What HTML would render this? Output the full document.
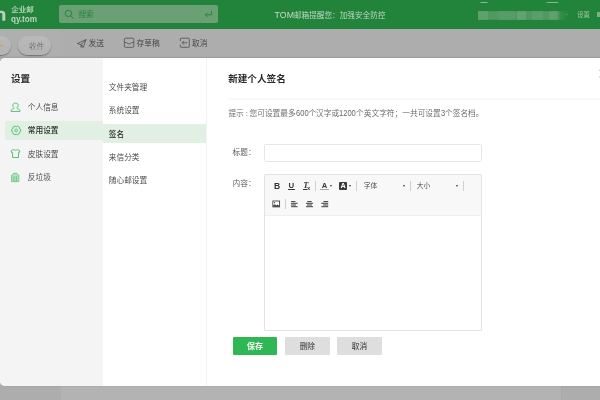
<!DOCTYPE html>
<html lang="zh-CN">
<head>
<meta charset="utf-8">
<title>TOM企业邮 - 设置</title>
<style>
*{box-sizing:border-box;margin:0;padding:0}
html,body{width:600px;height:400px;overflow:hidden;background:#b3b3b3}
body{position:relative;font-family:"Liberation Sans","Noto Sans CJK SC",sans-serif;font-size:7.7px;color:#444;line-height:1}
.abs{position:absolute;white-space:nowrap}
/* header */
#hdr{left:0;top:0;width:600px;height:29.2px;background:#21843a}
#search{left:59.3px;top:5.4px;width:158.5px;height:17.8px;border-radius:2px;background:#6b9f74}
.ht{color:#c6dbca}
/* toolbar */
#tb{left:0;top:29.2px;width:600px;height:28.8px;background:#adadad}
#tbl{left:0;top:29.2px;width:60.3px;height:28.8px;background:#afafaf}
.pill{border-radius:10px;background:linear-gradient(#b9b9b9,#b3b3b3);box-shadow:0 1.1px 1.4px rgba(0,0,0,.38)}
.tt{color:#3e3e3e;font-weight:350}
/* modal */
#modal{left:0;top:57.7px;width:600px;height:327.9px;background:#fff;border-radius:5px 0 0 5px;overflow:hidden;box-shadow:0 0 2px rgba(0,0,0,.12)}
#lp{left:0;top:0;width:103px;height:332px;background:#f4f4f4}
#dv{left:206px;top:0;width:1px;height:332px;background:#f2f2f2}
.hl{background:#e2efe3}
.mi{color:#3e3e3e;font-size:7.7px;line-height:10px;font-weight:350}
h1,h2{font-weight:bold;font-size:9.6px;color:#2a2a2a;line-height:13px}
.btn{height:17.6px;width:44.7px;border-radius:1px;text-align:center;line-height:19.2px;font-size:7.7px}
.sep{width:1px;height:9.5px;background:#d0d0d0}
.car{width:0;height:0;border-left:1.8px solid transparent;border-right:1.8px solid transparent;border-top:2.4px solid #3a3a3a;margin-left:-0.2px;margin-top:-0.2px}
.ic{color:#3a3a3a;font-weight:bold}
.dg{display:inline-block;font-size:8.8px;line-height:10px;transform:scaleX(.86);transform-origin:0 50%;color:#686868;font-weight:400}
</style>
</head>
<body>
<div id="root" style="position:absolute;left:0;top:0;width:600px;height:400px;will-change:transform;overflow:hidden">
<!-- header -->
<div id="hdr" class="abs"></div>
<svg class="abs" style="left:0;top:10px" width="7" height="12" viewBox="0 0 7 12"><path d="M-3 10.8V3.9C-3 2.1 -1.6 0.7 0.2 0.7h1.9C3.9 0.7 5.3 2.1 5.3 3.9V10.8H2.3V4.1C2.3 3.3 1.9 2.9 1.2 2.9H0V10.8Z" fill="#bfcdc2"/></svg>
<div class="abs" style="left:11.2px;top:5.3px;color:#b0cfb7;font-weight:bold;font-size:7.5px;line-height:9px;transform:scaleY(.88);transform-origin:0 8.4px">企业邮</div>
<div class="abs" style="left:10.9px;top:14.4px;color:#bdd3c2;font-weight:bold;font-size:8.2px;line-height:11px">qy.tom</div>
<div id="search" class="abs"></div>
<svg class="abs" style="left:64.2px;top:8.9px" width="11" height="11" viewBox="0 0 10 10"><circle cx="4" cy="4" r="2.9" fill="none" stroke="#24823c" stroke-width="0.85"/><path d="M6.1 6.1L8.6 8.8" stroke="#24823c" stroke-width="0.85"/></svg>
<div class="abs" style="left:78.4px;top:9.8px;color:#2c8342;font-size:7.7px;line-height:10px">搜索</div>
<svg class="abs" style="left:204px;top:10px" width="9" height="8" viewBox="0 0 9 8"><path d="M7.5 0.8V4.8H1.5M3.6 2.6L1.4 4.8L3.6 7" fill="none" stroke="#24823c" stroke-width="0.9"/></svg>
<div class="abs ht" style="left:274.6px;top:10px;font-size:7.64px;line-height:10px;font-weight:350"><span style="font-size:8.8px;font-weight:400">TOM</span>邮箱提醒您：加强安全防控</div>
<svg class="abs" style="left:477px;top:10px" width="92" height="11" viewBox="0 0 92 11"><defs><filter id="bl" x="-5%" y="-20%" width="110%" height="140%"><feGaussianBlur stdDeviation="0.7"/></filter><linearGradient id="fd" x1="0" x2="1"><stop offset="0" stop-color="#3d9052"/><stop offset="1" stop-color="#2a8841" stop-opacity="0.6"/></linearGradient></defs><g filter="url(#bl)"><rect x="1" y="1.2" width="81" height="8.6" fill="#52995f"/><rect x="1" y="1.2" width="10" height="8.6" fill="#5ea06c"/><rect x="22" y="1.2" width="16" height="8.6" fill="#579c66"/><rect x="40" y="1.2" width="9" height="8.6" fill="#60a26f"/><rect x="55" y="1.2" width="11" height="8.6" fill="#5a9e69"/><rect x="72" y="1.2" width="8" height="8.6" fill="#5ea06c"/><rect x="82" y="1.2" width="8" height="8.6" fill="url(#fd)"/></g></svg>
<div class="abs" style="left:566.4px;top:13.6px;width:0;height:0;border-left:1.3px solid transparent;border-right:1.3px solid transparent;border-top:1.6px solid #6aa878"></div>
<div class="abs" style="left:577.2px;top:10.2px;font-size:6.3px;line-height:9px;color:#b4cfba;font-weight:350">设置</div>
<div class="abs" style="left:596.8px;top:12px;width:4px;height:5.4px;background:#7db08a"></div>
<div class="abs" style="left:479.5px;top:1.7px;width:8px;height:1.8px;border-radius:50%;background:#86bd93"></div>
<div class="abs" style="left:545.8px;top:1.7px;width:13px;height:1.8px;border-radius:50%;background:#86bd93"></div>
<!-- toolbar -->
<div id="tb" class="abs"></div>
<div id="tbl" class="abs"></div>
<div class="abs pill" style="left:-9px;top:36px;width:20.2px;height:19.4px"></div>
<div class="abs" style="left:0;top:44.8px;width:2.9px;height:1.3px;background:#d6a322"></div>
<div class="abs pill" style="left:18px;top:36px;width:33.3px;height:19.4px"></div>
<div class="abs" style="left:29px;top:41.8px;color:#5c5c5c;font-weight:300;font-size:7.6px;line-height:10px">收件</div>
<svg class="abs" style="left:76px;top:37.6px" width="12" height="12" viewBox="0 0 12 12"><path d="M1.2 5.6L10 1.6L7.2 9.6L5.2 6.6Z M5.2 6.6L10 1.6 M5.2 6.6L4.9 9.4L6.3 8.1" fill="none" stroke="#4a4a4a" stroke-width="0.75" stroke-linejoin="round"/></svg>
<div class="abs tt" style="left:88.5px;top:38.9px;line-height:10px">发送</div>
<svg class="abs" style="left:123.4px;top:37.4px" width="12" height="12" viewBox="0 0 12 12"><rect x="1.4" y="1.2" width="9.4" height="9.1" rx="0.9" fill="none" stroke="#4a4a4a" stroke-width="0.75"/><path d="M1.4 5.6H3.8C4.2 7.4 8 7.4 8.4 5.6H10.8" fill="none" stroke="#4a4a4a" stroke-width="0.75"/></svg>
<div class="abs tt" style="left:136.5px;top:38.9px;line-height:10px">存草稿</div>
<svg class="abs" style="left:179px;top:37.4px" width="12" height="12" viewBox="0 0 12 12"><path d="M1.4 4V1.9Q1.4 1.2 2.1 1.2H9.6Q10.3 1.2 10.3 1.9V9.6Q10.3 10.3 9.6 10.3H2.1Q1.4 10.3 1.4 9.6V7.5" fill="none" stroke="#4a4a4a" stroke-width="0.75"/><path d="M8.4 5.75H3.2M5 3.9L3.2 5.75L5 7.6" fill="none" stroke="#4a4a4a" stroke-width="0.75"/></svg>
<div class="abs tt" style="left:192px;top:38.9px;line-height:10px">取消</div>
<div class="abs" style="left:0;top:55.7px;width:600px;height:2px;background:linear-gradient(rgba(0,0,0,0),rgba(0,0,0,.07))"></div>
<!-- bottom strip -->
<div class="abs" style="left:0;top:385px;width:61px;height:15px;background:#adadad"></div>
<div class="abs" style="left:561px;top:385px;width:39px;height:15px;background:#adadad;border-left:1px solid #a9a9a9"></div>
<!-- modal -->
<div id="modal" class="abs">
  <div id="lp" class="abs"></div>
  <div id="dv" class="abs"></div>
  <h1 class="abs" style="left:11px;top:14.3px">设置</h1>
  <div class="abs hl" style="left:5px;top:63.3px;width:98px;height:18.9px;border-radius:2px 0 0 2px"></div>
  <div class="abs hl" style="left:103px;top:66.3px;width:103px;height:19px"></div>
  <!-- left icons -->
  <svg class="abs" style="left:10px;top:44.6px" width="11" height="11" viewBox="0 0 11 11"><path d="M5.5 1.1C7.3 1.1 8.2 2 8.2 3.4C8.2 4.6 7.6 5.3 7 5.7C6.9 6.4 7.4 6.8 8.4 7.1C9.6 7.5 10 8.1 10 9.4H1C1 8.1 1.4 7.5 2.6 7.1C3.6 6.8 4.1 6.4 4 5.7C3.4 5.3 2.8 4.6 2.8 3.4C2.8 2 3.7 1.1 5.5 1.1Z" fill="none" stroke="#4cc26a" stroke-width="0.95" stroke-linejoin="round"/></svg>
  <svg class="abs" style="left:10.5px;top:67px" width="11" height="11" viewBox="0 0 11 11"><path d="M9.59 4.22 L9.59 6.58 L8.45 7.28 L8.42 8.62 L6.38 9.79 L5.20 9.15 L4.02 9.79 L1.98 8.62 L1.95 7.28 L0.81 6.58 L0.81 4.22 L1.95 3.52 L1.98 2.18 L4.02 1.01 L5.20 1.65 L6.38 1.01 L8.42 2.18 L8.45 3.52 L9.59 4.22Z" fill="none" stroke="#4cc26a" stroke-width="0.95" stroke-linejoin="round"/><circle cx="5.2" cy="5.4" r="1.35" fill="none" stroke="#4cc26a" stroke-width="0.95"/></svg>
  <svg class="abs" style="left:10px;top:90.2px" width="11" height="11" viewBox="0 0 11 11"><path d="M3.7 1.5C4.3 2.5 6.7 2.5 7.3 1.5L9.9 2.9L9.1 4.9L8.5 4.6V9.5H2.5V4.6L1.9 4.9L1.1 2.9Z" fill="none" stroke="#4cc26a" stroke-width="0.95" stroke-linejoin="round"/></svg>
  <svg class="abs" style="left:10px;top:114.6px" width="11" height="11" viewBox="0 0 11 11"><path d="M1.6 3.4L3.6 1.3H6.8L8.8 3.4V9.6H1.6Z" fill="#b4e2c0" stroke="#62ca7e" stroke-width="0.9" stroke-linejoin="round"/><path d="M4 4.2V9M6.4 4.2V9" stroke="#5cc879" stroke-width="0.9"/></svg>
  <!-- left menu text -->
  <div class="abs mi" style="left:27.8px;top:45.8px">个人信息</div>
  <div class="abs mi" style="left:27.8px;top:68.6px;color:#2c2c2c;font-weight:500">常用设置</div>
  <div class="abs mi" style="left:27.8px;top:92px">皮肤设置</div>
  <div class="abs mi" style="left:27.8px;top:115.3px">反垃圾</div>
  <!-- middle menu -->
  <div class="abs mi" style="left:108.8px;top:25.6px">文件夹管理</div>
  <div class="abs mi" style="left:108.8px;top:48.8px">系统设置</div>
  <div class="abs mi" style="left:108.8px;top:72px;color:#2c2c2c;font-weight:500">签名</div>
  <div class="abs mi" style="left:108.8px;top:95px">来信分类</div>
  <div class="abs mi" style="left:108.8px;top:118.6px">随心邮设置</div>
  <!-- right -->
  <h2 class="abs" style="left:228.2px;top:14.5px">新建个人签名</h2>
  <svg class="abs" style="left:598.6px;top:11px" width="9" height="10" viewBox="0 0 9 10"><path d="M0.2 1L7.4 8.2M0.2 8.2L7.4 1" stroke="#a4a4a4" stroke-width="0.9" fill="none"/></svg>
  <div class="abs" style="left:228.4px;top:40.4px;width:372px;height:2px;background:linear-gradient(#f8f8f8,#fbfbfb)"></div>
  <div class="abs" style="left:228.4px;top:50.8px;line-height:10px;color:#666;font-weight:350;font-size:7.71px">提示<span style="margin:0 1.7px 0 1.9px">:</span>您可设置最多<span class="dg" style="margin-right:-2.06px">600</span>个汉字或<span class="dg" style="margin-right:-2.74px">1200</span>个英文字符；一共可设置<span class="dg" style="margin-right:-.68px">3</span>个签名档。</div>
  <div class="abs" style="left:232.6px;top:90.6px;line-height:10px;color:#555;font-weight:350">标题：</div>
  <div class="abs" style="left:263.7px;top:86.6px;width:218px;height:17.4px;border:1px solid #e6e6e6;border-radius:1.5px;background:#fff"></div>
  <div class="abs" style="left:232.6px;top:121.4px;line-height:10px;color:#555;font-weight:350">内容：</div>
  <div class="abs" style="left:263.7px;top:116.6px;width:218px;height:156.6px;border:1px solid #e3e3e3;border-radius:1px;background:#fff">
    <div class="abs" style="left:0;top:0;width:216px;height:40.8px;background:#f8f8f8;border-bottom:1px solid #f0f0f0"></div>
  </div>
  <!-- editor toolbar row1 (coords relative to modal) -->
  <div class="abs ic" style="left:273.5px;top:122.6px;font-size:9.5px;line-height:11px;color:#333;transform:scaleX(.9);transform-origin:0 0">B</div>
  <div class="abs ic" style="left:288.6px;top:123.3px;font-size:7.8px;line-height:10px">U</div>
  <div class="abs" style="left:288.4px;top:131.6px;width:6.4px;height:0.9px;background:#3a3a3a"></div>
  <div class="abs ic" style="left:303.2px;top:123.3px;font-style:italic;font-size:8.4px;line-height:10px;font-family:'Liberation Serif',serif">T</div>
  <div class="abs" style="left:303px;top:131.6px;width:4.4px;height:0.9px;background:#3a3a3a"></div>
  <div class="abs ic" style="left:307px;top:128.4px;font-size:5.8px;line-height:5px">x</div>
  <div class="abs sep" style="left:315.3px;top:123.6px"></div>
  <div class="abs ic" style="left:321.7px;top:123.6px;font-size:7.6px;line-height:9px">A</div>
  <div class="abs" style="left:320.4px;top:131.1px;width:8.2px;height:1px;background:#a8a8a8"></div>
  <div class="abs car" style="left:330.4px;top:127.7px"></div>
  <div class="abs" style="left:339.2px;top:124.3px;width:7.8px;height:8px;background:#3a3a3a;border-radius:1px;color:#fff;font-weight:bold;font-size:7.3px;line-height:8.6px;text-align:center;overflow:hidden">A</div>
  <div class="abs car" style="left:349.6px;top:127.7px"></div>
  <div class="abs sep" style="left:356.3px;top:123.6px"></div>
  <div class="abs" style="left:363.7px;top:123.3px;font-size:6.8px;line-height:9px;color:#444;font-weight:350">字体</div>
  <div class="abs car" style="left:403px;top:127.7px"></div>
  <div class="abs sep" style="left:409.6px;top:123.6px"></div>
  <div class="abs" style="left:416.7px;top:123.3px;font-size:6.8px;line-height:9px;color:#444;font-weight:350">大小</div>
  <div class="abs car" style="left:456px;top:127.7px"></div>
  <div class="abs sep" style="left:462.6px;top:123.6px"></div>
  <!-- row2 -->
  <svg class="abs" style="left:264px;top:138.3px" width="80" height="16" viewBox="264 196 80 16"><rect x="272.85" y="201" width="6.75" height="5.9" fill="#fff" stroke="#3c3c3c" stroke-width="0.85"/><path d="M273.2 206.7V205.6L274.9 204.2L276.2 205.5L277.5 204.4L279.2 205.8V206.7Z" fill="#3c3c3c"/><circle cx="274.6" cy="202.7" r="0.6" fill="#3c3c3c"/><g stroke="#333" stroke-width="0.95" fill="none"><path d="M291.1 201.6H295.4M291.1 203.3H297.6M291.1 205H296M291.1 206.7H297.6"/><path d="M307.3 201.6H311.7M306 203.3H313M307 205H312M306 206.7H313"/><path d="M323.4 201.6H328.2M321.3 203.3H328.2M323 205H328.2M321.3 206.7H328.2"/></g></svg>
  <div class="abs sep" style="left:285.4px;top:141.3px;height:10px"></div>
  <!-- buttons -->
  <div class="abs btn" style="left:232.7px;top:279.3px;background:#2eb752;color:#fff;font-weight:bold;font-size:8px;line-height:19.6px">保存</div>
  <div class="abs btn" style="left:285px;top:279.3px;background:#dedede;color:#303030">删除</div>
  <div class="abs btn" style="left:337.2px;top:279.3px;background:#dedede;color:#303030">取消</div>
</div>
</div>
</body>
</html>
